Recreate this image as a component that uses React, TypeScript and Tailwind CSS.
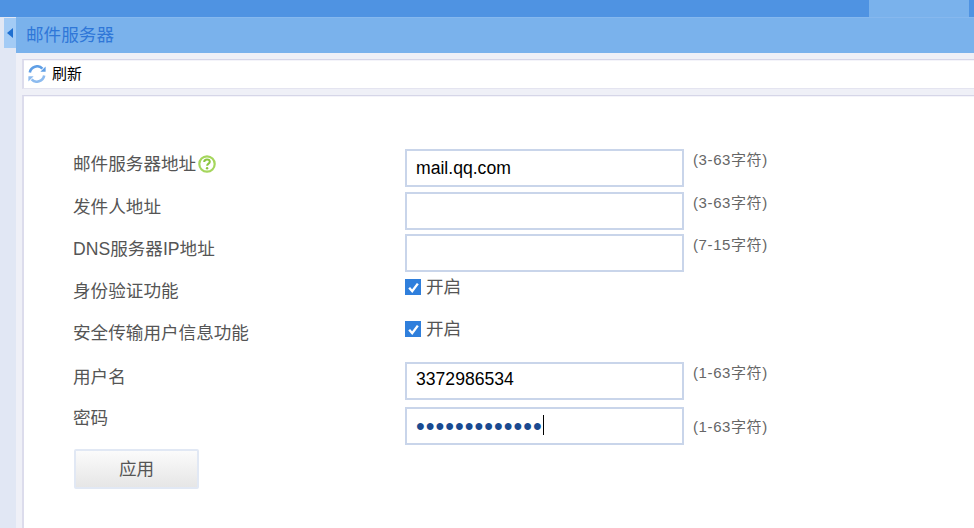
const labelFont = "font-['Liberation_Sans','Noto_Sans_CJK_SC',sans-serif]"

const RefreshIcon = () => (
  <svg width="18" height="18" viewBox="0 0 18 18" fill="none" className="shrink-0">
    <path d="M1.8 7.4A7.4 7.4 0 0 1 14.4 3.6" stroke="#5f9fe6" strokeWidth="2.6" />
    <path d="M16.2 10.6A7.4 7.4 0 0 1 3.6 14.4" stroke="#8dbbef" strokeWidth="2.6" />
    <path d="M17.6 1.6V6.8H12.4Z" fill="#5f9fe6" />
    <path d="M0.4 16.4V11.2H5.6Z" fill="#8dbbef" />
  </svg>
)

const HelpIcon = () => (
  <svg width="18" height="18" viewBox="0 0 18 18" fill="none" className="shrink-0">
    <circle cx="9" cy="9" r="7.7" stroke="#a5d65c" strokeWidth="2.2" />
    <path d="M6.2 7C6.2 5.2 7.5 4.4 9 4.4C10.6 4.4 11.8 5.4 11.8 6.8C11.8 8.7 9.1 8.6 9.1 10.8" stroke="#8cc63f" strokeWidth="2" />
    <circle cx="9.1" cy="13.2" r="1.2" fill="#8cc63f" />
  </svg>
)

const Check = () => (
  <span className="flex h-4 w-4 items-center justify-center bg-[#2f7fdc]">
    <svg width="13" height="13" viewBox="0 0 12 12" fill="none">
      <path d="M2 6.2L4.8 9.4L10 2.4" stroke="#fff" strokeWidth="2.2" />
    </svg>
  </span>
)

const Hint = ({ text, className = "mt-px" }: { text: string; className?: string }) => (
  <span className={`ml-[9px] self-start text-[15px] leading-[20px] tracking-[0.6px] text-[#666] ${className}`}>{text}</span>
)

const Label = ({ children, className = "" }: { children: React.ReactNode; className?: string }) => (
  <div className={`flex w-[332px] shrink-0 items-center gap-[2px] self-start text-[17.6px] leading-[26px] text-[#555] ${className}`}>
    {children}
  </div>
)

const inputBase = "h-[38px] w-[279px] border-2 border-[#c9d5ea] bg-white pl-[9px] outline-none"
const inputClass = `${inputBase} text-[17.6px] text-black`

export default function App() {
  return (
    <div className={`flex h-[528px] w-[974px] flex-col overflow-hidden bg-white ${labelFont}`}>
      {/* Barra superior */}
      <div className="flex h-[17px] shrink-0 justify-end bg-[#4f93e2] pr-[5px]">
        <div className="w-[100px] bg-[#7ab2ec]" />
      </div>
      <div className="flex min-h-0 flex-1">
        {/* Lateral */}
        <div className="w-[16px] shrink-0 bg-[#e1e7f4] pt-px pl-1">
          <div className="flex h-[30px] w-3 items-center justify-center bg-[#a3cbf5]">
            <span className="h-0 w-0 border-y-[5px] border-r-[6px] border-y-transparent border-r-[#1f6fd0]" />
          </div>
        </div>
        <div className="flex min-w-0 flex-1 flex-col bg-[#eff0f7]">
          <div className="flex h-[36px] shrink-0 items-center border-t border-[#86b8ee] bg-[#7ab2ec] pl-[10px] text-[17.6px] text-[#2f77d8]">
            邮件服务器
          </div>
          <div className="mt-[6px] ml-[6px] flex h-[30px] shrink-0 items-center gap-[6px] border-x-0 border-t border-b border-l-2 border-t-[#d6d6e8] border-b-[#e4e4f0] border-l-[#dcdcec] bg-white pl-[4px] text-[15px] text-black shadow-[inset_0_1px_0_#f4f4fa]">
            <RefreshIcon />
            刷新
          </div>
          <div className="mt-[6px] ml-[6px] min-h-0 flex-1 border-t border-l-2 border-t-[#d6d6e8] border-l-[#dcdcec] bg-white pt-[53px] pl-[49px] shadow-[inset_0_1px_0_#f4f4fa]">
            <div className="flex h-[43px]">
              <Label className="pt-[2px]">邮件服务器地址<HelpIcon /></Label>
              <input readOnly value="mail.qq.com" className={inputClass} />
              <Hint text="(3-63字符)" />
            </div>
            <div className="flex h-[42px]">
              <Label className="pt-[2px]">发件人地址</Label>
              <input readOnly value="" className={inputClass} />
              <Hint text="(3-63字符)" />
            </div>
            <div className="flex h-[43px]">
              <Label className="pt-[2px]">DNS服务器IP地址</Label>
              <input readOnly value="" className={inputClass} />
              <Hint text="(7-15字符)" />
            </div>
            <div className="flex h-[42px]">
              <Label className="pt-[1px]">身份验证功能</Label>
              <div className="flex h-[20px] items-center gap-[5px] text-[17.6px] text-[#555]"><Check />开启</div>
            </div>
            <div className="flex h-[43px]">
              <Label className="pt-[1px]">安全传输用户信息功能</Label>
              <div className="flex h-[20px] items-center gap-[5px] text-[17.6px] text-[#555]"><Check />开启</div>
            </div>
            <div className="flex h-[45px]">
              <Label className="pt-[2px]">用户名</Label>
              <input readOnly value="3372986534" className={`${inputClass} pb-[3px]`} />
              <Hint text="(1-63字符)" />
            </div>
            <div className="flex h-[42px]">
              <Label className="-mt-[2px]">密码</Label>
              <div className="relative">
                <input readOnly type="password" value="1234567890123" className={`${inputBase} text-[25px] tracking-[1px] text-[#1a4a90]`} />
                <span className="absolute top-[8px] left-[138px] h-[20px] w-px bg-black" />
              </div>
              <Hint text="(1-63字符)" className="mt-[10px]" />
            </div>
            <button className="ml-px h-[40px] w-[125px] rounded-[2px] border-2 border-[#e1e8f4] bg-gradient-to-b from-[#fbfbfb] to-[#e6e6e6] text-[17.6px] text-[#555]">
              应用
            </button>
          </div>
        </div>
      </div>
    </div>
  )
}
